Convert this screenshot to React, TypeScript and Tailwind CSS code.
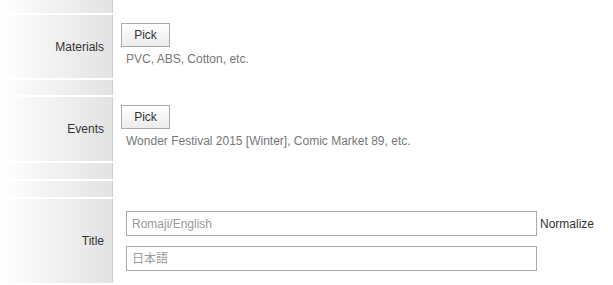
import React from "react";

const font = { fontFamily: '"Liberation Sans", Arial, "Noto Sans CJK JP", sans-serif' };

function Row({ label, h, children }: { label?: string; h: string; children?: React.ReactNode }) {
    return (
        <div className={`flex ${h}`}>
            <div className="w-[113px] shrink-0 flex items-center justify-end pr-[8px] bg-gradient-to-r from-white to-[#e3e3e3] border-r border-[#cfcfcf] text-[12px] text-[#333]">
                {label}
            </div>
            <div className="flex-1 pl-[8px]">{children}</div>
        </div>
    );
}

function PickField({ hint }: { hint: string }) {
    return (
        <div className="pt-[7px]">
            <button className="w-[49px] h-[24px] border border-[#aaa] bg-gradient-to-b from-white to-[#ececec] text-[12px] text-[#333] leading-none">
                Pick
            </button>
            <div className="ml-[5px] mt-[5px] text-[12px] leading-[14px] text-[#777]">{hint}</div>
        </div>
    );
}

export default function App() {
    return (
        <div className="w-[613px] h-[285px] bg-white flex flex-col gap-[2px]" style={font}>
            <Row h="h-[13px]" />
            <Row label="Materials" h="h-[63px]">
                <PickField hint="PVC, ABS, Cotton, etc." />
            </Row>
            <Row h="h-[15px]" />
            <Row label="Events" h="h-[64px]">
                <PickField hint="Wonder Festival 2015 [Winter], Comic Market 89, etc." />
            </Row>
            <Row h="h-[16px]" />
            <Row h="h-[16px]" />
            <Row label="Title" h="h-[84px]">
                <div className="pt-[12px] pl-[5px] flex flex-col gap-[10px]">
                    <div className="flex items-center gap-[3px]">
                        <input
                            placeholder="Romaji/English"
                            className="w-[411px] h-[25px] border border-[#aaa] px-[5px] text-[12px] text-[#333] placeholder:text-[#999] outline-none"
                        />
                        <span className="text-[12px] text-[#333]">Normalize</span>
                    </div>
                    <input
                        placeholder="日本語"
                        className="w-[411px] h-[25px] border border-[#aaa] px-[5px] text-[12px] text-[#333] placeholder:text-[#999] outline-none"
                    />
                </div>
            </Row>
        </div>
    );
}
